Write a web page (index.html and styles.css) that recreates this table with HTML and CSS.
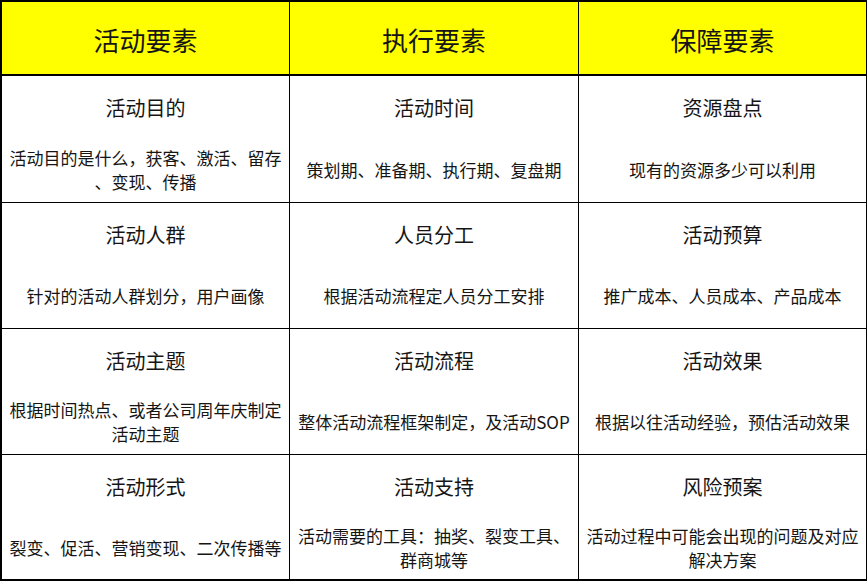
FILE: index.html
```html
<!DOCTYPE html>
<html lang="zh-CN">
<head>
<meta charset="utf-8">
<title>活动要素</title>
<link rel="stylesheet" href="styles.css">
</head>
<body>
<div class="table">
  <div class="head">活动要素</div>
  <div class="head">执行要素</div>
  <div class="head">保障要素</div>

  <div class="cell"><div class="title">活动目的</div><div class="desc">活动目的是什么，获客、激活、留存<br>、变现、传播</div></div>
  <div class="cell"><div class="title">活动时间</div><div class="desc">策划期、准备期、执行期、复盘期</div></div>
  <div class="cell"><div class="title">资源盘点</div><div class="desc">现有的资源多少可以利用</div></div>

  <div class="cell"><div class="title">活动人群</div><div class="desc">针对的活动人群划分，用户画像</div></div>
  <div class="cell"><div class="title">人员分工</div><div class="desc">根据活动流程定人员分工安排</div></div>
  <div class="cell"><div class="title">活动预算</div><div class="desc">推广成本、人员成本、产品成本</div></div>

  <div class="cell"><div class="title">活动主题</div><div class="desc">根据时间热点、或者公司周年庆制定<br>活动主题</div></div>
  <div class="cell"><div class="title">活动流程</div><div class="desc">整体活动流程框架制定，及活动SOP</div></div>
  <div class="cell"><div class="title">活动效果</div><div class="desc">根据以往活动经验，预估活动效果</div></div>

  <div class="cell"><div class="title">活动形式</div><div class="desc">裂变、促活、营销变现、二次传播等</div></div>
  <div class="cell"><div class="title">活动支持</div><div class="desc">活动需要的工具：抽奖、裂变工具、<br>群商城等</div></div>
  <div class="cell"><div class="title">风险预案</div><div class="desc">活动过程中可能会出现的问题及对应<br>解决方案</div></div>
</div>
</body>
</html>
```

FILE: styles.css
```css
html, body {
  margin: 0;
  padding: 0;
  background: #ffffff;
}

body {
  font-family: "Noto Sans CJK SC", "Noto Sans", sans-serif;
  color: #151515;
}

.table {
  display: grid;
  grid-template-columns: 287px 288px 287px;
  grid-template-rows: 73px 126px 125px 125px 124px;
  gap: 1px;
  width: 862px;
  background: #000000;
  border: 3px solid #000000;
  border-top-width: 2px;
  border-left-width: 2px;
  border-right-width: 3px;
  border-bottom-width: 2px;
}

.head {
  background: #ffff00;
  border-bottom: 1px solid #000000;
  display: flex;
  align-items: center;
  justify-content: center;
  padding-top: 3px;
  font-size: 26px;
  box-sizing: border-box;
}

.cell {
  background: #ffffff;
  display: grid;
  grid-template-rows: 63px 1fr;
}

.title {
  display: flex;
  align-items: center;
  justify-content: center;
  font-size: 20px;
}

.desc {
  display: flex;
  align-items: center;
  justify-content: center;
  text-align: center;
  font-size: 17px;
  line-height: 24px;
  white-space: nowrap;
  padding-bottom: 2px;
}
```
